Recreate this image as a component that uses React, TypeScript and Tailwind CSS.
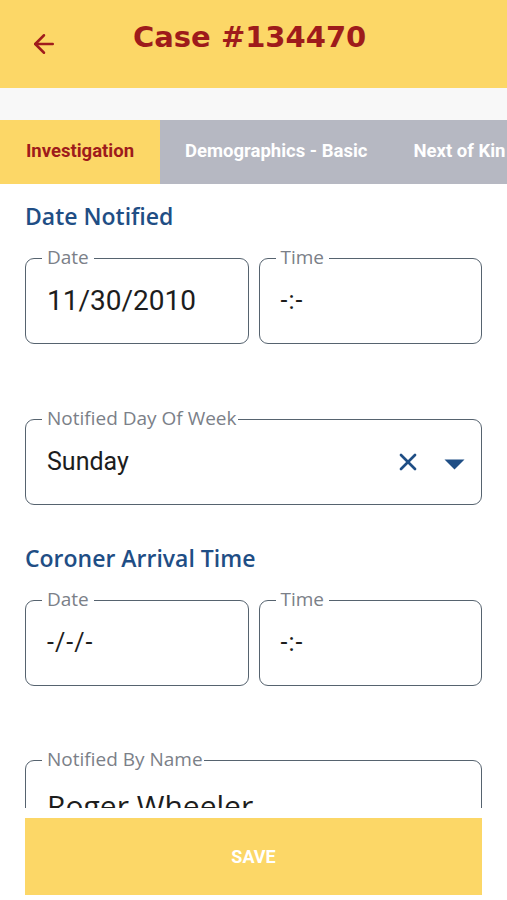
import { ArrowLeft, X } from "lucide-react";

function Field({ label, value, light }: { label: string; value: string; light?: boolean }) {
  return (
    <div className="relative h-[86px] rounded-[9px] border-[1.5px] border-[#56636f] flex items-center px-[21px]">
      <span className="absolute -top-[12px] left-[16px] bg-white px-[5px] text-[19px] leading-[20px] text-[#7b8088] font-['Open_Sans',sans-serif]">
        {label}
      </span>
      <span
        className={
          "text-[#1d1d1d] font-['Roboto',sans-serif] " + (light ? "text-[25px] tracking-[1px]" : "text-[28px]")
        }
      >
        {value}
      </span>
    </div>
  );
}

function Heading({ children }: { children: string }) {
  return (
    <h3 className="text-[23px] leading-[28px] font-semibold text-[#1f4e85] font-['Open_Sans',sans-serif]">
      {children}
    </h3>
  );
}

export default function App() {
  return (
    <div className="w-full h-[900px] flex flex-col bg-white overflow-hidden">
      <header className="h-[88px] shrink-0 bg-[#fcd767] flex items-center pl-[29px] gap-[74px]">
        <ArrowLeft size={30} strokeWidth={2} className="text-[#a01c1c]" />
        <h1 className="text-[29px] leading-none font-bold text-[#9e1b1b] font-['DejaVu_Sans',sans-serif] -mt-[14px]">
          Case #134470
        </h1>
      </header>
      <div className="h-[32px] shrink-0 bg-[#f8f8f8]" />
      <nav className="h-[64px] shrink-0 flex bg-[#b6b8c2] font-['Roboto',sans-serif] text-[18.5px] font-bold whitespace-nowrap overflow-hidden">
        <div className="w-[160px] shrink-0 bg-[#fcd767] text-[#9e1b1b] flex items-center justify-center">
          Investigation
        </div>
        <div className="shrink-0 text-white flex items-center pl-[25px] pr-[46px]">Demographics - Basic</div>
        <div className="shrink-0 text-white flex items-center">Next of Kin</div>
      </nav>
      <main className="flex-1 overflow-hidden px-[25px] pt-[18px]">
        <Heading>Date Notified</Heading>
        <div className="grid grid-cols-2 gap-[10px] mt-[28px]">
          <Field label="Date" value="11/30/2010" />
          <Field label="Time" value="-:-" light />
        </div>
        <div className="relative mt-[75px] h-[86px] rounded-[9px] border-[1.5px] border-[#56636f] flex items-center pl-[21px] pr-[16px]">
          <span className="absolute -top-[12px] left-[16px] bg-white pl-[5px] pr-[1px] text-[19px] leading-[20px] text-[#7b8088] font-['Open_Sans',sans-serif]">
            Notified Day Of Week
          </span>
          <span className="flex-1 text-[25px] text-[#1d1d1d] font-['Roboto',sans-serif]">Sunday</span>
          <X size={28} strokeWidth={2.3} className="text-[#1f4e85]" />
          <svg width="21" height="11" viewBox="0 0 21 11" className="ml-[22px] mt-[4px]">
            <path d="M0.5 0.5 L20.5 0.5 L10.5 10.5 Z" fill="#1f4e85" />
          </svg>
        </div>
        <div className="mt-[39px]">
          <Heading>Coroner Arrival Time</Heading>
        </div>
        <div className="grid grid-cols-2 gap-[10px] mt-[28px]">
          <Field label="Date" value="-/-/-" light />
          <Field label="Time" value="-:-" light />
        </div>
        <div className="relative mt-[74px] h-[86px] rounded-[9px] border-[1.5px] border-[#56636f] flex items-center px-[21px]">
          <span className="absolute -top-[12px] left-[16px] bg-white pl-[5px] pr-[1px] text-[19px] leading-[20px] text-[#7b8088] font-['Open_Sans',sans-serif]">
            Notified By Name
          </span>
          <span className="text-[30px] text-[#1d1d1d] font-['Open_Sans',sans-serif] mt-[4px]">Roger Wheeler</span>
        </div>
      </main>
      <footer className="shrink-0 px-[25px] pt-[10px] pb-[5px]">
        <button className="w-full h-[77px] bg-[#fcd767] text-white text-[18px] font-bold font-['Roboto',sans-serif]">
          SAVE
        </button>
      </footer>
    </div>
  );
}
